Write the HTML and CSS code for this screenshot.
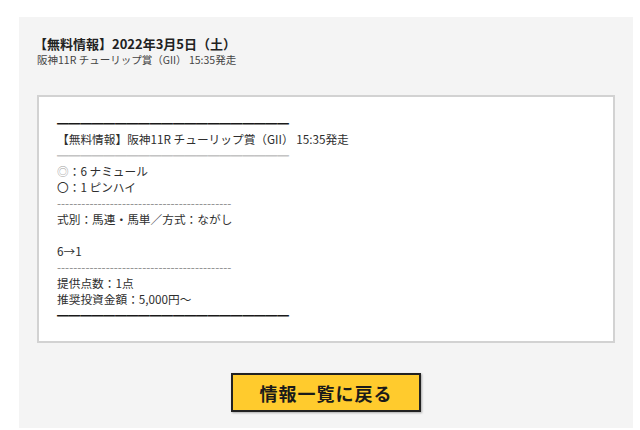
FILE: index.html
```html
<!DOCTYPE html>
<html lang="ja">
<head>
<meta charset="utf-8">
<link rel="stylesheet" href="styles.css">
</head>
<body>
<div class="panel">
  <div class="head">
    <h1 class="title">【無料情報】2022年3月5日（土）</h1>
    <p class="sub">阪神11R チューリップ賞（GII） 15:35発走</p>
  </div>
  <div class="box">
    <p class="line bar">━━━━━━━━━━━━━━━━━━━━</p>
    <p class="line">【無料情報】阪神11R チューリップ賞（GII） 15:35発走</p>
    <p class="line bar light">━━━━━━━━━━━━━━━━━━━━</p>
    <p class="line"><span class="mark">◎</span>：6 ナミュール</p>
    <p class="line">〇：1 ピンハイ</p>
    <p class="line dash">-------------------------------------------</p>
    <p class="line">式別：馬連・馬単／方式：ながし</p>
    <p class="line">&nbsp;</p>
    <p class="line">6→1</p>
    <p class="line dash">-------------------------------------------</p>
    <p class="line">提供点数：1点</p>
    <p class="line">推奨投資金額：5,000円～</p>
    <p class="line bar">━━━━━━━━━━━━━━━━━━━━</p>
  </div>
  <div class="actions">
    <a class="btn" href="#">情報一覧に戻る</a>
  </div>
</div>
</body>
</html>
```

FILE: styles.css
```css
html, body {
  margin: 0;
  padding: 0;
  background: #ffffff;
}
body {
  font-family: "Noto Sans CJK JP", "Noto Sans", sans-serif;
  color: #333333;
}
.panel {
  margin: 17px 0 0 19px;
  width: 614px;
  height: 411px;
  box-sizing: border-box;
  background: #f4f4f4;
  padding: 18px 18px 0 18px;
}
.head {
  height: 60px;
}
.title {
  margin: 0;
  font-size: 13px;
  font-weight: bold;
  line-height: 18px;
  color: #222222;
  margin-left: -3px;
}
.sub {
  margin: 0;
  font-size: 10.5px;
  line-height: 14px;
  color: #444444;
}
.box {
  background: #ffffff;
  border: 2px solid #d2d2d2;
  padding: 18px 18px 18px 18px;
}
.line {
  margin: 0;
  font-size: 11.7px;
  line-height: 16px;
  white-space: nowrap;
  color: #2e2e2e;
}
.bar {
  color: #1a1a1a;
  letter-spacing: -0.1px;
}
.bar.light {
  color: #c4c4c4;
}
.dash {
  color: #888888;
}
.mark {
  color: #a0a0a0;
}
.actions {
  display: flex;
  justify-content: center;
  padding-top: 30px;
}
.btn {
  display: flex;
  align-items: center;
  justify-content: center;
  width: 190px;
  height: 39px;
  box-sizing: border-box;
  background: #ffcb2d;
  border: 2px solid #222222;
  box-shadow: 1px 1px 2px rgba(0,0,0,0.3);
  color: #1a1a1a;
  font-size: 18px;
  font-weight: bold;
  text-decoration: none;
  letter-spacing: 1px;
}
```
